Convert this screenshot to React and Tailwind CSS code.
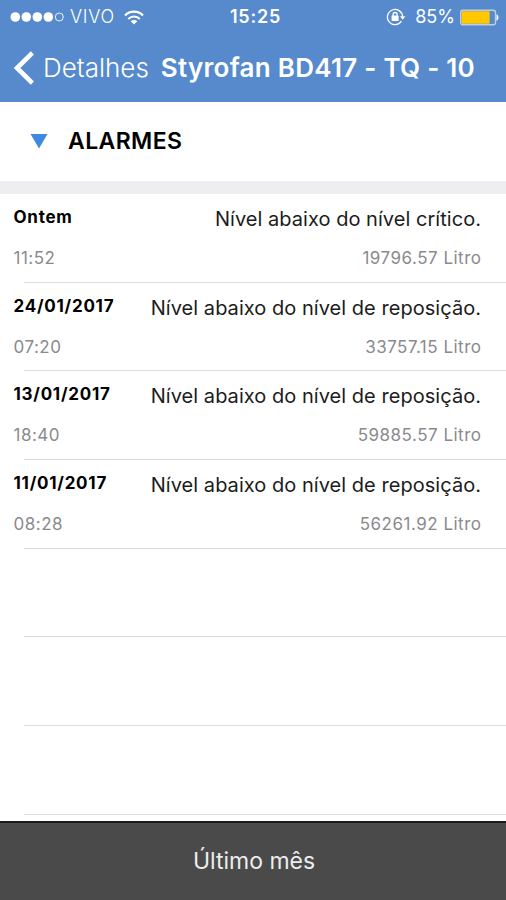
import { useState } from "react";

const alarms = [
  { date: "Ontem", time: "11:52", message: "Nível abaixo do nível crítico.", value: "19796.57 Litro" },
  { date: "24/01/2017", time: "07:20", message: "Nível abaixo do nível de reposição.", value: "33757.15 Litro" },
  { date: "13/01/2017", time: "18:40", message: "Nível abaixo do nível de reposição.", value: "59885.57 Litro" },
  { date: "11/01/2017", time: "08:28", message: "Nível abaixo do nível de reposição.", value: "56261.92 Litro" },
];

function StatusBar() {
  return (
    <div className="grid h-[34px] grid-cols-[1fr_auto_1fr] items-center pl-[10px] pr-[7px] text-[18px] leading-none">
      <div className="flex items-center">
        <svg width="55" height="12" viewBox="0 0 55 12" fill="#fff">
          <circle cx="5.3" cy="6" r="4.8" />
          <circle cx="16.3" cy="6" r="4.8" />
          <circle cx="27.3" cy="6" r="4.8" />
          <circle cx="38.3" cy="6" r="4.8" />
          <circle cx="49.3" cy="6" r="4" fill="none" stroke="#fff" strokeWidth="0.9" />
        </svg>
        <span className="ml-[5px] font-light tracking-[0.7px]">VIVO</span>
        <svg className="ml-[9px]" width="20" height="15" viewBox="0 0 20 15" fill="none" stroke="#fff" strokeWidth="2.1">
          <path d="M1 5.4C6 .4 14 .4 19 5.4" />
          <path d="M4.2 8.9c3.3-3.2 8.3-3.2 11.6 0" />
          <path d="M10 14.5 6.7 11.3c1.8-1.7 4.8-1.7 6.6 0z" fill="#fff" stroke="none" />
        </svg>
      </div>
      <span className="pl-[2px] font-semibold tracking-[0.8px]">15:25</span>
      <div className="flex items-center justify-end">
        <svg width="20" height="18" viewBox="0 0 20 18" fill="none" stroke="#fff" strokeWidth="1.3">
          <path d="M15.4 13.2A7.6 7.6 0 1 1 16.6 8.6" />
          <path d="M14 8.2h5.4l-2.7 3.6z" fill="#fff" stroke="none" />
          <rect x="5.6" y="7.6" width="7" height="5.4" rx=".6" fill="#fff" stroke="none" />
          <path d="M7.1 8V6.5a2 2 0 0 1 4 0V8" />
        </svg>
        <span className="ml-[9px]">85%</span>
        <svg className="ml-[5px]" width="39" height="17" viewBox="0 0 39 17">
          <rect x=".7" y="1.2" width="34.8" height="14.6" rx="2.2" fill="none" stroke="#c3cbe0" strokeWidth="1.4" />
          <rect x="1.6" y="2.2" width="28" height="12.6" rx="1" fill="#ffc800" />
          <path d="M36.5 5.2c2.6.8 2.6 5.800 0 6.600z" fill="#fff" />
        </svg>
      </div>
    </div>
  );
}

function AlarmRow({ alarm }) {
  return (
    <div className="flex h-[88.7px] shrink-0 flex-col">
      <div className="flex flex-1 justify-between pl-[13.5px] pr-[25px]">
        {alarm && (
          <>
            <div className="flex flex-col">
              <span className="mt-[12px] text-[17px] leading-[22px] font-bold tracking-[0.75px] text-black">{alarm.date}</span>
              <span className="mt-[19px] text-[17px] leading-[22px] tracking-[0.5px] text-[#8a8a8e]">{alarm.time}</span>
            </div>
            <div className="flex flex-col items-end">
              <span className="mt-[12px] text-[20px] leading-[26px] tracking-[0.04px] text-[#1c1c1c]">{alarm.message}</span>
              <span className="-mr-[0.5px] mt-[15px] text-[17px] leading-[22px] tracking-[0.5px] text-[#8a8a8e]">{alarm.value}</span>
            </div>
          </>
        )}
      </div>
      <div className="ml-[24px] h-px bg-[#dcdcde]" />
    </div>
  );
}

function App() {
  const [open, setOpen] = useState(true);
  const rows = [...alarms, null, null, null];

  return (
    <div className="flex h-[900px] w-[506px] flex-col overflow-hidden bg-white font-['Inter',sans-serif]">
      <header className="h-[102px] shrink-0 bg-[#568acd] text-white">
        <StatusBar />
        <div className="flex h-[67px] items-center pl-[13px]">
          <button className="flex items-center">
            <svg width="22" height="34" viewBox="0 0 22 34" fill="none" stroke="#fff" strokeWidth="4.6">
              <path d="M19.4 1.8 4 17l15.4 15.2" />
            </svg>
            <span className="ml-[8px] text-[26px] font-light whitespace-nowrap">Detalhes</span>
          </button>
          <h1 className="ml-[12px] text-[26px] font-semibold tracking-[0.26px] whitespace-nowrap">Styrofan BD417 - TQ - 10</h1>
        </div>
      </header>

      <button onClick={() => setOpen(!open)} className="flex h-[79px] shrink-0 items-center pl-[30px]">
        <svg width="18" height="16" viewBox="0 0 18 16" fill="#3f8ae0">
          <path d="M.5 0h17L9 14.5z" />
        </svg>
        <span className="ml-[20px] text-[23px] font-semibold tracking-[0.4px] text-black">ALARMES</span>
      </button>
      <div className="h-[13px] shrink-0 bg-[#eeeef0]" />

      <main className="flex min-h-0 flex-1 flex-col overflow-hidden">
        {open && rows.map((alarm, index) => <AlarmRow key={index} alarm={alarm} />)}
      </main>

      <footer className="flex h-[79px] shrink-0 items-center justify-center border-t-2 border-[#1a1a1a] bg-[#4a4a4a] pl-[2px] text-[23px] text-[#ededed]">
        Último mês
      </footer>
    </div>
  );
}

export default App;
